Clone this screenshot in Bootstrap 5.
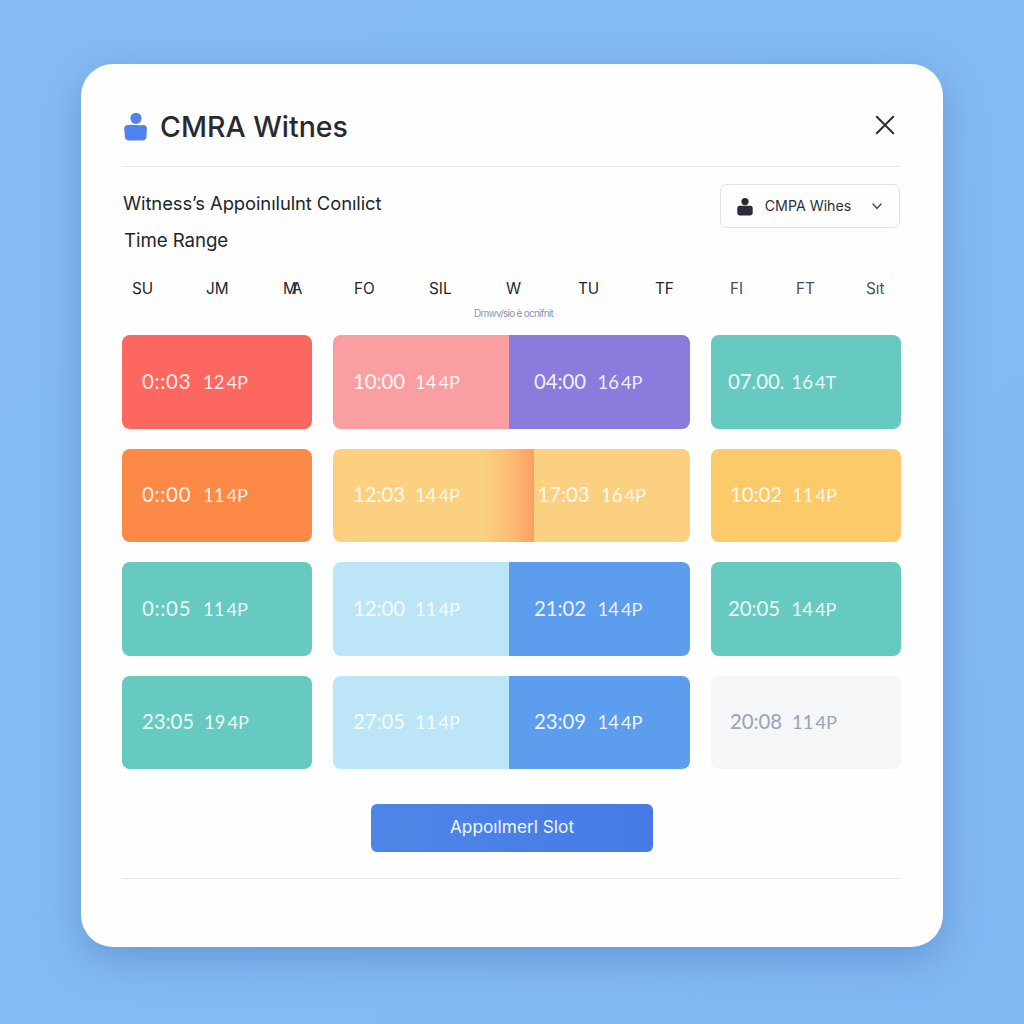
<!DOCTYPE html>
<html lang="en">
<head>
<meta charset="utf-8">
<meta name="viewport" content="width=device-width, initial-scale=1">
<title>CMRA Witnes</title>
<link href="https://cdn.jsdelivr.net/npm/bootstrap@5.3.0/dist/css/bootstrap.min.css" rel="stylesheet">
<style>
body{font-family:Inter,"Liberation Sans",sans-serif;background:linear-gradient(135deg,#87bbf4 0%,#84bbf5 55%,#82b8f4 100%);color:#20262f;height:1024px;overflow:hidden}
.panel{width:862px;height:883px;margin:64px 0 0 81px;padding:0 43px 0 41px;border-radius:32px;background:#fefefe;box-shadow:0 12px 42px rgba(50,90,160,.36)}
.panel-head{height:103px;padding-top:45px;border-bottom:1px solid #e4e7ea}
.title{font-size:28.5px;font-weight:500;margin:0 0 0 12px;line-height:36px;color:#272a2e}
.plain-btn{background:none;border:0;padding:0;line-height:0;margin:6px 5px 0 0}
.subhead{height:99px;padding-top:17px}
.sub-a,.sub-b{font-size:18.4px;line-height:37px;margin:0;white-space:nowrap;padding:1px 0 0 1px;letter-spacing:-.08px}
.sub-b{font-size:18.7px;padding:0 0 0 2px}
.picker{width:180px;height:44px;border:1px solid #dce2ea;border-radius:7px;background:#fefefe;padding:0 17px 0 16px;color:#2b303a}
.picker-label{font-size:14.2px;margin-right:9px;padding-bottom:1px}
.days{height:69px;padding-top:12px;font-size:15.3px;line-height:22px;display:grid;grid-template-columns:74px 76px 72px 75px 77px 72px 77px 75px 66px 70px 30px;padding-left:10px}
.tight{letter-spacing:-5px;padding-left:1px}
.faded{color:#4a5059}
.hint{font-size:10px;line-height:12px;color:#8d93bd;left:352px;top:41px;letter-spacing:-.75px;white-space:nowrap}
.slots{display:grid;grid-template-columns:190px 357px 190px;column-gap:21px;row-gap:20px;grid-auto-rows:93.6px}
.slot{border-radius:8px;overflow:hidden;display:flex}
.part{display:flex;align-items:baseline;flex:1;font-family:Lato,sans-serif;font-size:20.4px;line-height:30px;color:rgba(255,255,255,.9);white-space:nowrap;padding:30.6px 0 0 20px}
.part.first{flex:0 0 176px}
.part.wide{flex:0 0 200.5px}
.part.second{padding-left:25px}
.part.near{padding-left:4px}
.part.last{padding-left:17px}
.part.inset{padding-left:19px}
.clock{width:62px;letter-spacing:-.1px}
.clock.airy{letter-spacing:.7px;width:61px}
.second .clock,.near .clock,.last .clock{width:63.5px}
.inset .clock{width:62px}
.mins{width:23.5px;font-size:18.4px}
.mark-s{font-size:18.2px}
.red{background:#fc685f}.pink{background:#f99fa1}.violet{background:#8b7bdd}.teal{background:#66cac0}
.orange{background:#fc8945}.gold{background:#fcca69}.sand{background:#fbd081}.sky{background:#bce5f7}.azure{background:#5c9dee}
.part.pale{background:#f5f6f8;color:#9aa3b3}
.blend{background:linear-gradient(90deg,#fbd081 75%,#fcbd74 88%,#fb9f65 100%)}
.book{width:282px;height:48px;margin:34.4px 0 0 249px;border-radius:6px;background:linear-gradient(90deg,#4d86e7,#467be5);border:0;color:#f1f7ff;font-size:17.3px;display:block;padding:0 0 1px}
.foot{border-top:1px solid #e5e8eb;margin-top:26px}
</style>
</head>
<body>
<main class="panel">
<header class="panel-head d-flex justify-content-between align-items-start">
<div class="d-flex align-items-center">
<svg width="26" height="30" viewBox="0 0 26 30" fill="#4f82ec"><circle cx="14" cy="6.3" r="5.6"/><path d="M6 13Q10 12.6 14 13T21 13Q24.8 12.9 24.9 16.5L24.5 24.5Q24.4 28.3 21 28.4H6.5Q3.2 28.3 2.9 24.8L2.2 17.5Q2 13.2 6 13Z"/></svg>
<h1 class="title">CMRA Witnes</h1>
</div>
<button class="plain-btn" aria-label="Close"><svg width="20" height="20" viewBox="0 0 20 20" stroke="#2a2c39" stroke-width="2" stroke-linecap="round"><path d="M1.8 1.8 18.2 18.2M18.2 1.8 1.8 18.2"/></svg></button>
</header>
<section class="subhead d-flex justify-content-between align-items-start">
<div><p class="sub-a">Witness’s Appoinılulnt Conılict</p><p class="sub-b">Time Range</p></div>
<button class="picker d-flex align-items-center justify-content-between">
<svg width="16" height="19" viewBox="0 0 16 19"><circle cx="8" cy="4.6" r="3.6" fill="#2d2926"/><rect x=".3" y="8.8" width="15.4" height="9.6" rx="2.3" fill="#292c3a"/></svg>
<span class="picker-label">CMPA Wihes</span>
<svg width="10" height="7" viewBox="0 0 10 7" fill="none" stroke="#444b58" stroke-width="1.4" stroke-linecap="round"><path d="M1 1 5 5.4 9 1"/></svg>
</button>
</section>
<section class="days position-relative">
<span>SU</span><span>JM</span><span class="tight">MA</span><span>FO</span><span>SIL</span><span>W</span><span>TU</span><span>TF</span><span class="faded">FI</span><span class="faded">FT</span><span class="faded">Sıt</span>
<div class="hint position-absolute">Dmwv/sio è ocnifnit</div>
</section>
<section class="slots">
<div class="slot"><div class="part red"><span class="clock airy">0::03</span><span class="mins">12</span><span class="mark-s">4P</span></div></div>
<div class="slot"><div class="part first pink"><span class="clock">10:00</span><span class="mins">14</span><span class="mark-s">4P</span></div><div class="part second violet"><span class="clock">04:00</span><span class="mins">16</span><span class="mark-s">4P</span></div></div>
<div class="slot"><div class="part last teal"><span class="clock">07.00.</span><span class="mins">16</span><span class="mark-s">4T</span></div></div>

<div class="slot"><div class="part orange"><span class="clock airy">0::00</span><span class="mins">11</span><span class="mark-s">4P</span></div></div>
<div class="slot"><div class="part wide blend"><span class="clock">12:03</span><span class="mins">14</span><span class="mark-s">4P</span></div><div class="part near sand"><span class="clock">17:03</span><span class="mins">16</span><span class="mark-s">4P</span></div></div>
<div class="slot"><div class="part last inset gold"><span class="clock">10:02</span><span class="mins">11</span><span class="mark-s">4P</span></div></div>

<div class="slot"><div class="part teal"><span class="clock airy">0::05</span><span class="mins">11</span><span class="mark-s">4P</span></div></div>
<div class="slot"><div class="part first sky"><span class="clock">12:00</span><span class="mins">11</span><span class="mark-s">4P</span></div><div class="part second azure"><span class="clock">21:02</span><span class="mins">14</span><span class="mark-s">4P</span></div></div>
<div class="slot"><div class="part last teal"><span class="clock">20:05</span><span class="mins">14</span><span class="mark-s">4P</span></div></div>

<div class="slot"><div class="part teal"><span class="clock">23:05</span><span class="mins">19</span><span class="mark-s">4P</span></div></div>
<div class="slot"><div class="part first sky"><span class="clock">27:05</span><span class="mins">11</span><span class="mark-s">4P</span></div><div class="part second azure"><span class="clock">23:09</span><span class="mins">14</span><span class="mark-s">4P</span></div></div>
<div class="slot"><div class="part last inset pale"><span class="clock">20:08</span><span class="mins">11</span><span class="mark-s">4P</span></div></div>
</section>
<button class="book">Appoılmerl Slot</button>
<div class="foot"></div>
</main>
<script src="https://cdn.jsdelivr.net/npm/bootstrap@5.3.0/dist/js/bootstrap.bundle.min.js"></script>
</body>
</html>
